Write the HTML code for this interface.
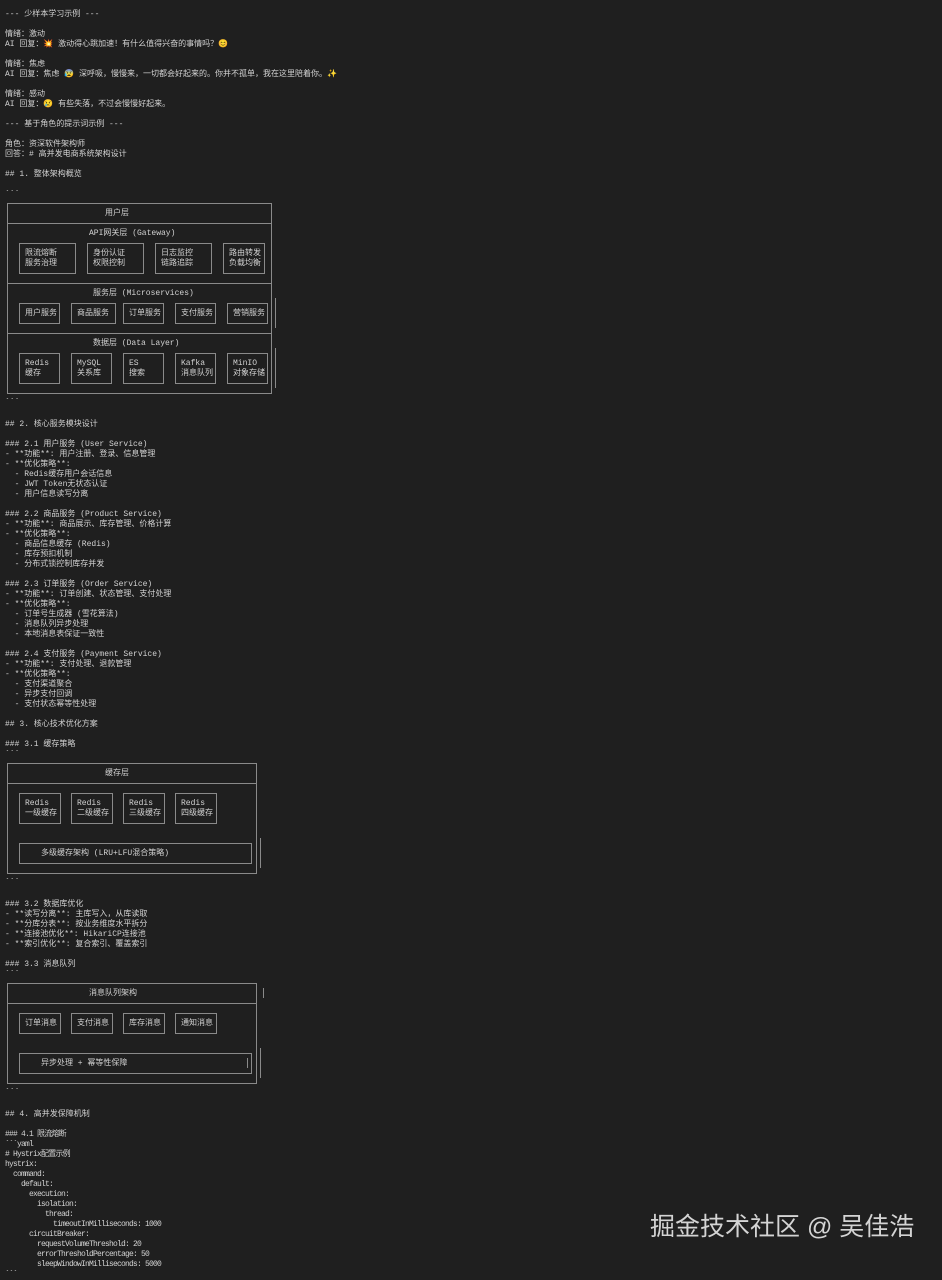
<!DOCTYPE html>
<html><head><meta charset="utf-8"><style>
html,body{margin:0;padding:0;background:#1f1f1f;}
body{width:942px;height:1273px;position:relative;overflow:hidden;font-family:"Liberation Mono","Noto Sans CJK SC",monospace;font-size:8px;color:#d2d2d2;}
.l{position:absolute;left:5px;line-height:10px;white-space:pre;margin-top:2px;}
.y{letter-spacing:-0.8px;}
.b{position:absolute;border:1px solid #8a8a8a;box-sizing:border-box;}
.h{position:absolute;height:1px;background:#8a8a8a;}
.v{position:absolute;width:1px;background:#8a8a8a;}
.t{position:absolute;line-height:10px;white-space:pre;margin-top:1px;}
.bx{position:absolute;border:1px solid #8a8a8a;box-sizing:border-box;line-height:10px;padding:0 0 0 5px;display:flex;flex-direction:column;justify-content:center;white-space:pre;}
.wm{position:absolute;left:650px;top:1210px;font-family:"Liberation Sans","Noto Sans CJK SC",sans-serif;font-size:25px;color:#d4d4d4;line-height:34px;white-space:nowrap;}
</style></head><body>
<div class="l" style="top:8px">--- 少样本学习示例 ---</div>
<div class="l" style="top:28px">情绪：激动</div>
<div class="l" style="top:38px">AI 回复：💥 激动得心跳加速！有什么值得兴奋的事情吗？😊</div>
<div class="l" style="top:58px">情绪：焦虑</div>
<div class="l" style="top:68px">AI 回复：焦虑 😰 深呼吸，慢慢来，一切都会好起来的。你并不孤单，我在这里陪着你。✨</div>
<div class="l" style="top:88px">情绪：感动</div>
<div class="l" style="top:98px">AI 回复：😢 有些失落，不过会慢慢好起来。</div>
<div class="l" style="top:118px">--- 基于角色的提示词示例 ---</div>
<div class="l" style="top:138px">角色：资深软件架构师</div>
<div class="l" style="top:148px">回答：# 高并发电商系统架构设计</div>
<div class="l" style="top:168px">## 1. 整体架构概览</div>
<div class="l" style="top:188px">&#96;&#96;&#96;</div>

<div class="b" style="left:7px;top:203px;width:265px;height:191px"></div>
<div class="t" style="left:105px;top:208px">用户层</div>
<div class="h" style="left:7px;top:223px;width:265px"></div>
<div class="t" style="left:89px;top:228px">API网关层 (Gateway)</div>
<div class="bx" style="left:19px;top:243px;width:57px;height:31px">限流熔断
服务治理</div>
<div class="bx" style="left:87px;top:243px;width:57px;height:31px">身份认证
权限控制</div>
<div class="bx" style="left:155px;top:243px;width:57px;height:31px">日志监控
链路追踪</div>
<div class="bx" style="left:223px;top:243px;width:42px;height:31px">路由转发
负载均衡</div>
<div class="h" style="left:7px;top:283px;width:265px"></div>
<div class="t" style="left:93px;top:288px">服务层 (Microservices)</div>
<div class="bx" style="left:19px;top:303px;width:41px;height:21px">用户服务</div>
<div class="bx" style="left:71px;top:303px;width:45px;height:21px">商品服务</div>
<div class="bx" style="left:123px;top:303px;width:41px;height:21px">订单服务</div>
<div class="bx" style="left:175px;top:303px;width:41px;height:21px">支付服务</div>
<div class="bx" style="left:227px;top:303px;width:41px;height:21px">营销服务</div>
<div class="v" style="left:275px;top:298px;height:30px"></div>
<div class="h" style="left:7px;top:333px;width:265px"></div>
<div class="t" style="left:93px;top:338px">数据层 (Data Layer)</div>
<div class="bx" style="left:19px;top:353px;width:41px;height:31px">Redis
缓存</div>
<div class="bx" style="left:71px;top:353px;width:41px;height:31px">MySQL
关系库</div>
<div class="bx" style="left:123px;top:353px;width:41px;height:31px">ES
搜索</div>
<div class="bx" style="left:175px;top:353px;width:41px;height:31px">Kafka
消息队列</div>
<div class="bx" style="left:227px;top:353px;width:41px;height:31px">MinIO
对象存储</div>
<div class="v" style="left:275px;top:348px;height:40px"></div>

<div class="l" style="top:396px">&#96;&#96;&#96;</div>
<div class="l" style="top:418px">## 2. 核心服务模块设计</div>
<div class="l" style="top:438px">### 2.1 用户服务 (User Service)
- **功能**: 用户注册、登录、信息管理
- **优化策略**:
  - Redis缓存用户会话信息
  - JWT Token无状态认证
  - 用户信息读写分离

### 2.2 商品服务 (Product Service)
- **功能**: 商品展示、库存管理、价格计算
- **优化策略**:
  - 商品信息缓存 (Redis)
  - 库存预扣机制
  - 分布式锁控制库存并发

### 2.3 订单服务 (Order Service)
- **功能**: 订单创建、状态管理、支付处理
- **优化策略**:
  - 订单号生成器 (雪花算法)
  - 消息队列异步处理
  - 本地消息表保证一致性

### 2.4 支付服务 (Payment Service)
- **功能**: 支付处理、退款管理
- **优化策略**:
  - 支付渠道聚合
  - 异步支付回调
  - 支付状态幂等性处理

## 3. 核心技术优化方案

### 3.1 缓存策略
&#96;&#96;&#96;</div>

<div class="b" style="left:7px;top:763px;width:250px;height:111px"></div>
<div class="t" style="left:105px;top:768px">缓存层</div>
<div class="h" style="left:7px;top:783px;width:250px"></div>
<div class="bx" style="left:19px;top:793px;width:42px;height:31px">Redis
一级缓存</div>
<div class="bx" style="left:71px;top:793px;width:42px;height:31px">Redis
二级缓存</div>
<div class="bx" style="left:123px;top:793px;width:42px;height:31px">Redis
三级缓存</div>
<div class="bx" style="left:175px;top:793px;width:42px;height:31px">Redis
四级缓存</div>
<div class="v" style="left:260px;top:838px;height:30px"></div>
<div class="b" style="left:19px;top:843px;width:233px;height:21px"></div>
<div class="t" style="left:41px;top:848px">多级缓存架构 (LRU+LFU混合策略)</div>

<div class="l" style="top:876px">&#96;&#96;&#96;</div>
<div class="l" style="top:898px">### 3.2 数据库优化
- **读写分离**: 主库写入，从库读取
- **分库分表**: 按业务维度水平拆分
- **连接池优化**: HikariCP连接池
- **索引优化**: 复合索引、覆盖索引

### 3.3 消息队列
&#96;&#96;&#96;</div>

<div class="b" style="left:7px;top:983px;width:250px;height:101px"></div>
<div class="t" style="left:89px;top:988px">消息队列架构</div>
<div class="v" style="left:263px;top:988px;height:10px"></div>
<div class="h" style="left:7px;top:1003px;width:250px"></div>
<div class="bx" style="left:19px;top:1013px;width:42px;height:21px">订单消息</div>
<div class="bx" style="left:71px;top:1013px;width:42px;height:21px">支付消息</div>
<div class="bx" style="left:123px;top:1013px;width:42px;height:21px">库存消息</div>
<div class="bx" style="left:175px;top:1013px;width:42px;height:21px">通知消息</div>
<div class="v" style="left:260px;top:1048px;height:30px"></div>
<div class="v" style="left:256px;top:1058px;height:10px"></div>
<div class="b" style="left:19px;top:1053px;width:233px;height:21px"></div>
<div class="v" style="left:247px;top:1058px;height:10px"></div>
<div class="t" style="left:41px;top:1058px">异步处理 + 幂等性保障</div>

<div class="l" style="top:1086px">&#96;&#96;&#96;</div>
<div class="l" style="top:1108px">## 4. 高并发保障机制</div>
<div class="l y" style="top:1128px">### 4.1 限流熔断
&#96;&#96;&#96;yaml
# Hystrix配置示例
hystrix:
  command:
    default:
      execution:
        isolation:
          thread:
            timeoutInMilliseconds: 1000
      circuitBreaker:
        requestVolumeThreshold: 20
        errorThresholdPercentage: 50
        sleepWindowInMilliseconds: 5000
&#96;&#96;&#96;</div>

<div class="wm">掘金技术社区 @ 吴佳浩</div>
</body></html>
